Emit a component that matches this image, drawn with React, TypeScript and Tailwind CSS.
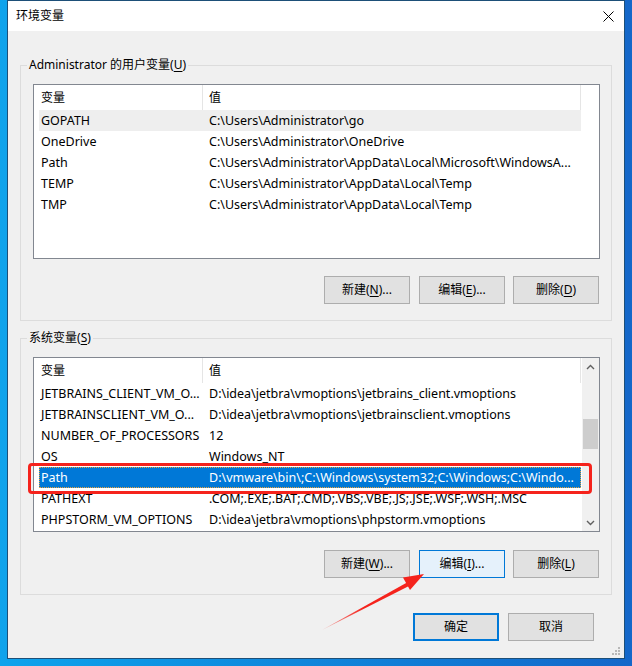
import clsx from "clsx"

const userVars = [
  ["GOPATH", "C:\\Users\\Administrator\\go"],
  ["OneDrive", "C:\\Users\\Administrator\\OneDrive"],
  ["Path", "C:\\Users\\Administrator\\AppData\\Local\\Microsoft\\WindowsA..."],
  ["TEMP", "C:\\Users\\Administrator\\AppData\\Local\\Temp"],
  ["TMP", "C:\\Users\\Administrator\\AppData\\Local\\Temp"],
]

const sysVars = [
  ["JETBRAINS_CLIENT_VM_O...", "D:\\idea\\jetbra\\vmoptions\\jetbrains_client.vmoptions"],
  ["JETBRAINSCLIENT_VM_O...", "D:\\idea\\jetbra\\vmoptions\\jetbrainsclient.vmoptions"],
  ["NUMBER_OF_PROCESSORS", "12"],
  ["OS", "Windows_NT"],
  ["Path", "D:\\vmware\\bin\\;C:\\Windows\\system32;C:\\Windows;C:\\Windo..."],
  ["PATHEXT", ".COM;.EXE;.BAT;.CMD;.VBS;.VBE;.JS;.JSE;.WSF;.WSH;.MSC"],
  ["PHPSTORM_VM_OPTIONS", "D:\\idea\\jetbra\\vmoptions\\phpstorm.vmoptions"],
]

function Chevron({ down }: { down?: boolean }) {
  return (
    <svg width="9" height="6" viewBox="0 0 9 6">
      <polyline
        points={down ? "1,1 4.5,4.5 8,1" : "1,5 4.5,1.5 8,5"}
        fill="none"
        stroke="#606060"
        strokeWidth="1.4"
      />
    </svg>
  )
}

function Scrollbar() {
  return (
    <div className="ml-px flex w-[17px] flex-col bg-[#f0f0f0]">
      <div className="flex h-[17px] items-center justify-center">
        <Chevron />
      </div>
      <div className="h-[44px]" />
      <div className="mx-px h-[30px] bg-[#cdcdcd]" />
      <div className="flex-1" />
      <div className="flex h-[17px] items-center justify-center">
        <Chevron down />
      </div>
    </div>
  )
}

function VarList({
  rows,
  hover,
  selected,
  scroll,
}: {
  rows: string[][]
  hover?: number
  selected?: number
  scroll?: boolean
}) {
  return (
    <div className="flex h-[175px] border border-[#828790] bg-white">
      <div className="flex w-[547px] flex-col">
        <div className="flex h-[25px] leading-[25px]">
          <div className="w-[169px] border-r border-[#e5e5e5] pl-[7px]">变量</div>
          <div className="w-[378px] border-r border-[#e5e5e5] pl-[6px]">值</div>
        </div>
        {rows.map(([name, value], i) => (
          <div
            key={i}
            className={clsx(
              "ml-[5px] flex h-[21px] w-[542px] text-[12.5px] leading-[19px] whitespace-nowrap",
              i === selected
                ? "border border-dotted border-[#e8a33d] bg-[#0078d7] text-white"
                : "border border-transparent",
              i === hover && "bg-[#eeeeee]"
            )}
          >
            <div className="w-[163px] overflow-hidden pl-[1px]">{name}</div>
            <div className="flex-1 overflow-hidden pl-[6px]">{value}</div>
          </div>
        ))}
      </div>
      {scroll && <Scrollbar />}
    </div>
  )
}

function Btn({
  label,
  k,
  tail = "",
  hover,
  primary,
  className,
}: {
  label: string
  k?: string
  tail?: string
  hover?: boolean
  primary?: boolean
  className?: string
}) {
  return (
    <div
      className={clsx(
        "flex h-[28px] w-[86px] items-center justify-center",
        hover
          ? "border border-[#0078d7] bg-[#e5f1fb]"
          : primary
            ? "border-2 border-[#0078d7] bg-[#e1e1e1]"
            : "border border-[#adadad] bg-[#e1e1e1]",
        className
      )}
    >
      {label}
      {k && (
        <>
          (<span className="underline underline-offset-2">{k}</span>)
        </>
      )}
      {tail}
    </div>
  )
}

function Group({
  title,
  k,
  children,
  className,
}: {
  title: string
  k: string
  children: React.ReactNode
  className?: string
}) {
  return (
    <fieldset
      className={clsx(
        "mx-[12px] border border-[#dcdcdc] pr-[11px] pb-[16px] pl-[12px]",
        className
      )}
    >
      <legend className="ml-[-6px] px-[2px] leading-[16px]">
        {title}(<span className="underline underline-offset-2">{k}</span>)
      </legend>
      <div className="pt-[11px]">{children}</div>
    </fieldset>
  )
}

export default function App() {
  return (
    <div className="relative h-[666px] w-[632px] overflow-hidden bg-gradient-to-r from-[#0fa3ec] to-[#1467c9] pl-[7px] font-['Noto_Sans','Noto_Sans_CJK_SC',sans-serif] text-[12px] text-black">
      <div className="flex h-[659px] w-[618px] flex-col border border-[#1d4f78] bg-[#f0f0f0]">
        <div className="flex h-[30px] items-center justify-between bg-white pl-[8px] pr-[10px]">
          <span>环境变量</span>
          <svg width="11" height="11" viewBox="0 0 11 11">
            <path d="M0.5 0.5 L10.5 10.5 M10.5 0.5 L0.5 10.5" stroke="#000" strokeWidth="1" />
          </svg>
        </div>

        <Group title="Administrator 的用户变量" k="U" className="mt-[26px]">
          <VarList rows={userVars} hover={0} />
          <div className="mt-[17px] flex justify-end pr-[1px]">
            <Btn label="新建" k="N" tail="..." />
            <Btn label="编辑" k="E" tail="..." className="ml-[9px]" />
            <Btn label="删除" k="D" className="ml-[8px]" />
          </div>
        </Group>

        <Group title="系统变量" k="S" className="mt-[9px]">
          <VarList rows={sysVars} selected={4} scroll />
          <div className="mt-[18px] flex justify-end pr-[1px]">
            <Btn label="新建" k="W" tail="..." />
            <Btn label="编辑" k="I" tail="..." hover className="ml-[9px]" />
            <Btn label="删除" k="L" className="ml-[8px]" />
          </div>
        </Group>

        <div className="mt-[18px] flex justify-end pr-[30px]">
          <Btn label="确定" primary />
          <Btn label="取消" className="ml-[9px]" />
        </div>

        <div className="mt-auto mb-[2px] mr-[3px] flex justify-end">
          <svg width="9" height="9" viewBox="0 0 9 9" fill="#b8b8b8">
            <rect x="6" y="0" width="2" height="2" />
            <rect x="3" y="3" width="2" height="2" />
            <rect x="6" y="3" width="2" height="2" />
            <rect x="0" y="6" width="2" height="2" />
            <rect x="3" y="6" width="2" height="2" />
            <rect x="6" y="6" width="2" height="2" />
          </svg>
        </div>
      </div>

      {/* annotation: red box around the selected Path row */}
      <div className="absolute top-[463px] left-[28px] h-[31px] w-[564px] rounded-[4px] border-[3px] border-[#f5231c]" />

      {/* annotation: red arrow pointing at the edit button */}
      <svg className="absolute top-0 left-0" width="632" height="666" viewBox="0 0 632 666">
        <defs>
          <linearGradient id="arrowFade" x1="322" y1="630" x2="424" y2="574" gradientUnits="userSpaceOnUse">
            <stop offset="0" stopColor="#f5231c" stopOpacity="0.3" />
            <stop offset="0.4" stopColor="#f5231c" />
          </linearGradient>
        </defs>
        <polygon points="322,630 407,582.5 409,586" fill="url(#arrowFade)" />
        <polygon points="424,574 403,577.5 410,590" fill="#f5231c" />
      </svg>
    </div>
  )
}
